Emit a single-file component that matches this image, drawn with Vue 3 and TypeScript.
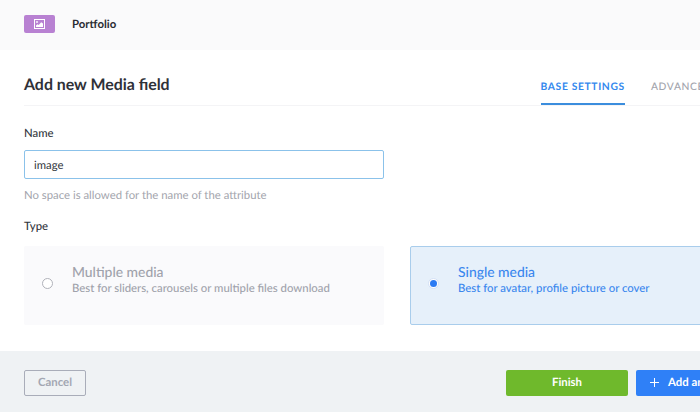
<script setup lang="ts">
import { ref } from 'vue'

interface MediaOption {
  value: 'multiple' | 'single'
  title: string
  description: string
}

const options: MediaOption[] = [
  { value: 'multiple', title: 'Multiple media', description: 'Best for sliders, carousels or multiple files download' },
  { value: 'single', title: 'Single media', description: 'Best for avatar, profile picture or cover' },
]
const tabs: string[] = ['Base settings', 'Advanced settings']

const name = ref('image')
const activeTab = ref(tabs[0])
const mediaType = ref<MediaOption['value']>('single')
</script>

<template>
  <div class="viewport">
    <div class="modal">
      <header class="header">
        <span class="badge">
          <svg width="11" height="10" viewBox="0 0 11 10">
            <rect x="0.5" y="0.5" width="10" height="9" fill="none" stroke="#fff" />
            <circle cx="3" cy="3" r="0.9" fill="#fff" />
            <path d="M2 8V6.4l1.5-1.1 1.2 0.7L7.2 3.2 9 4.6v3.4z" fill="#fff" />
          </svg>
        </span>
        <span class="crumb">Portfolio</span>
      </header>

      <main class="body">
        <div class="heading">
          <h1>Add new Media field</h1>
          <nav class="tabs">
            <button
              v-for="tab in tabs"
              :key="tab"
              class="tab"
              :class="{ active: tab === activeTab }"
              @click="activeTab = tab"
            >{{ tab }}</button>
          </nav>
        </div>

        <label class="label" for="name">Name</label>
        <input id="name" v-model="name" class="input" type="text" />
        <p class="hint">No space is allowed for the name of the attribute</p>

        <p class="label type-label">Type</p>
        <div class="cards">
          <div
            v-for="option in options"
            :key="option.value"
            class="card"
            :class="{ selected: option.value === mediaType }"
            @click="mediaType = option.value"
          >
            <span class="radio"></span>
            <div>
              <div class="card-title">{{ option.title }}</div>
              <div class="card-text">{{ option.description }}</div>
            </div>
          </div>
        </div>
      </main>

      <footer class="footer">
        <button class="btn cancel">Cancel</button>
        <button class="btn finish">Finish</button>
        <button class="btn add">
          <svg width="9" height="9" viewBox="0 0 9 9">
            <path d="M4.5 0v9M0 4.5h9" stroke="#fff" stroke-width="1" fill="none" />
          </svg>
          <span>Add another field</span>
        </button>
      </footer>
    </div>
  </div>
</template>

<style>
body {
  overflow: hidden;
}
</style>

<style scoped>
.viewport {
  width: 100%;
  height: 412px;
  overflow: hidden;
  background: #fff;
}
.modal {
  display: flex;
  flex-direction: column;
  width: 794px;
  height: 412px;
  font-family: Lato, sans-serif;
  font-size: 11.35px;
  color: #333740;
}
.modal * {
  box-sizing: border-box;
  text-rendering: geometricPrecision;
}
button {
  font-family: inherit;
  cursor: pointer;
}
.header {
  display: flex;
  align-items: center;
  height: 50px;
  padding: 0 24px 2px;
  background: #fafafb;
}
.badge {
  display: flex;
  align-items: center;
  justify-content: center;
  width: 31px;
  height: 18px;
  border-radius: 2px;
  background: #b881d2;
}
.crumb {
  margin-left: 17px;
  color: #2b2d33;
  font-size: 11.4px;
  font-weight: 700;
}
.body {
  flex: 1;
  padding: 19px 24px 0;
}
.heading {
  display: flex;
  justify-content: space-between;
  height: 37px;
  border-bottom: 1px solid #f4f4f6;
}
h1 {
  margin: 0;
  color: #2f3138;
  font-size: 15.9px;
  font-weight: 700;
  line-height: 31px;
}
.tabs {
  display: flex;
  gap: 26px;
  width: 229.5px;
}
.tab {
  flex: none;
  height: 36px;
  padding: 1px 0 0;
  border: 0;
  border-bottom: 2px solid transparent;
  background: none;
  color: #a3a5ad;
  font-size: 10.3px;
  font-weight: 500;
  letter-spacing: 0.65px;
  text-transform: uppercase;
  white-space: nowrap;
}
.tab.active {
  border-bottom-color: #3b8ddd;
  color: #3388ee;
  font-weight: 700;
}
.label {
  display: block;
  margin: 20px 0 0;
  font-weight: 500;
  line-height: 16px;
}
.input {
  display: block;
  width: 360px;
  height: 29px;
  margin-top: 8px;
  padding: 1px 9px 0;
  border: 1px solid #8bc2ea;
  border-radius: 2px;
  outline: 0;
  background: #fff;
  color: #333740;
  font: 400 11.35px Lato, sans-serif;
}
.hint {
  margin: 9px 0 0;
  color: #a3a5ad;
  line-height: 16px;
}
.type-label {
  margin-top: 15px;
}
.cards {
  display: grid;
  grid-template-columns: 360px 360px;
  gap: 26px;
  margin-top: 11px;
}
.card {
  display: flex;
  height: 79px;
  padding: 16px 17px 0;
  border: 1px solid #fafafc;
  border-radius: 2px;
  background: #fafafc;
  color: #a0a2ab;
  cursor: pointer;
}
.radio {
  display: flex;
  align-items: center;
  justify-content: center;
  flex: none;
  width: 11px;
  height: 11px;
  margin: 15px 19px 0 0;
  border: 1px solid #b0b2ba;
  border-radius: 50%;
  background: #fff;
}
.card-title {
  font-size: 13.9px;
  font-weight: 500;
  line-height: 17px;
}
.card-text {
  font-weight: 500;
  line-height: 18px;
}
.card.selected {
  border-color: #a9cdec;
  background: #e6f0fa;
  color: #3a87ee;
}
.selected .radio {
  border-color: #d4e1f6;
}
.selected .radio::after {
  content: '';
  width: 7px;
  height: 7px;
  flex: none;
  border-radius: 50%;
  background: #2b7bf3;
}
.footer {
  display: flex;
  align-items: flex-start;
  height: 61px;
  padding: 19px 24px 0;
  background: #eff2f4;
}
.btn {
  display: flex;
  align-items: center;
  justify-content: center;
  height: 26px;
  padding: 0 0 2px;
  border: 0;
  border-radius: 2px;
  color: #fff;
  font-size: 11.4px;
  font-weight: 700;
  white-space: nowrap;
}
.cancel {
  width: 62px;
  border: 1px solid #a9adb9;
  background: transparent;
  color: #a3a7b2;
}
.finish {
  width: 122px;
  margin-left: auto;
  background: #6fb92c;
}
.add {
  justify-content: flex-start;
  width: 134px;
  margin-left: 8px;
  padding-left: 14px;
  gap: 9px;
  background: #2f80f7;
}
</style>
